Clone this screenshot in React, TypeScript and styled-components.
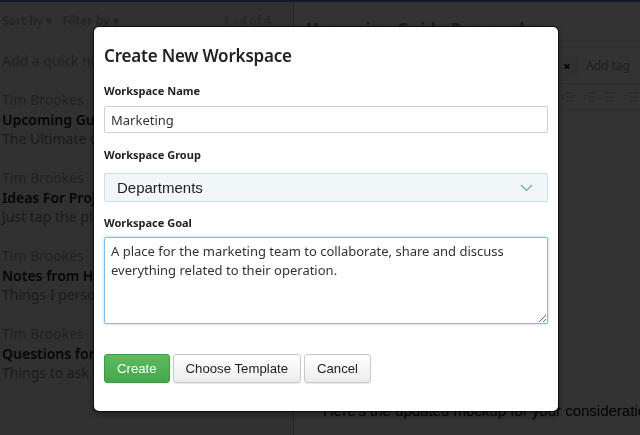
import React from "react";
import styled, { createGlobalStyle } from "styled-components";
import { IndentDecrease, IndentIncrease, AlignLeft, AlignCenter } from "lucide-react";

const GlobalStyle = createGlobalStyle`
  html, body {
    margin: 0;
    padding: 0;
    width: 640px;
    height: 435px;
    overflow: hidden;
    background: #fff;
    font-family: "Noto Sans", "Open Sans", sans-serif;
  }
  * { box-sizing: border-box; }
`;

const AppShell = styled.div`
  width: 640px;
  height: 435px;
  display: flex;
  flex-direction: column;
  background: #fff;
`;

const TopStrip = styled.div`
  flex: none;
  height: 2px;
  background: #5a86b8;
`;

const Columns = styled.div`
  flex: 1;
  display: flex;
  min-height: 0;
`;

const NoteList = styled.aside`
  flex: none;
  width: 294px;
  border-right: 1px solid #bdbdbd;
  background: #f3f3f3;
  display: flex;
  flex-direction: column;
  overflow: hidden;
`;

const ListHeader = styled.div`
  height: 36px;
  display: flex;
  align-items: center;
  padding: 0 22px 0 2px;
  gap: 10px;
  font-size: 12px;
  font-weight: 600;
  color: #b4b4b4;
  white-space: nowrap;

  > .count {
    margin-left: auto;
    font-weight: 400;
  }
`;

const QuickNote = styled.div`
  height: 44px;
  display: flex;
  align-items: center;
  padding-left: 2px;
  font-size: 14px;
  color: #a8a8a8;
  white-space: nowrap;
`;

const NoteItem = styled.div`
  padding: 8px 0 0 2px;
  height: 78px;
  font-size: 14px;
  line-height: 19.5px;
  white-space: nowrap;

  > .author { color: #a8a8a8; }
  > .title { color: #222; font-weight: 600; }
  > .snippet { color: #8a8a8a; }
`;

const Editor = styled.main`
  flex: 1;
  min-width: 0;
  display: flex;
  flex-direction: column;
  overflow: hidden;
`;

const NoteTitle = styled.h1`
  margin: 0;
  height: 46px;
  padding: 17px 0 0 12px;
  font-size: 17px;
  line-height: 22px;
  font-weight: 700;
  color: #808080;
  white-space: nowrap;
  border-bottom: 1px solid #e0e0e0;
`;

const TagRow = styled.div`
  height: 36px;
  display: flex;
  align-items: center;
  justify-content: flex-end;
  gap: 8px;
  padding-right: 10px;
  border-bottom: 1px solid #e0e0e0;
  font-size: 12px;
  color: #999;
`;

const TagChip = styled.span`
  width: 22px;
  height: 22px;
  display: inline-flex;
  align-items: center;
  justify-content: center;
  background: #f4f6f8;
  color: #000;
  font-size: 13px;
  font-weight: 700;
`;

const Toolbar = styled.div`
  height: 26px;
  display: flex;
  align-items: center;
  justify-content: flex-end;
  gap: 8px;
  color: #b0b0b0;
  border-bottom: 1px solid #e6e6e6;
`;

const NoteBody = styled.div`
  flex: 1;
  display: flex;
  align-items: flex-end;
  padding: 0 0 16px 29px;
  font-family: "Liberation Sans", Arial, sans-serif;
  font-size: 15px;
  color: #111;
  white-space: nowrap;
  overflow: hidden;
`;

const Backdrop = styled.div`
  position: fixed;
  inset: 0;
  background: rgba(0, 0, 0, 0.8);
  display: flex;
  align-items: flex-start;
  padding: 27px 0 0 94px;
`;

const Modal = styled.div`
  width: 464px;
  height: 384px;
  background: #fff;
  border-radius: 5px;
  padding: 14px 10px 0 10px;
  box-shadow: 0 0 0 1px rgba(0, 0, 0, 0.6), 0 3px 10px rgba(0, 0, 0, 0.45);
  display: flex;
  flex-direction: column;
  font-family: "Noto Sans", "Open Sans", sans-serif;
`;

const ModalTitle = styled.h2`
  margin: 0 0 12px 0;
  font-size: 17px;
  line-height: 30px;
  font-weight: 600;
  letter-spacing: -0.2px;
  color: #222;
`;

const FieldLabel = styled.label<{ $gap?: number }>`
  display: block;
  font-size: 11px;
  line-height: 16px;
  font-weight: 700;
  color: #222;
  margin-bottom: ${(p) => p.$gap ?? 7}px;
`;

const Field = styled.div<{ $after: number }>`
  margin-bottom: ${(p) => p.$after}px;
`;

const TextInput = styled.input`
  display: block;
  width: 100%;
  height: 27px;
  border: 1px solid #cfcfcf;
  border-radius: 2px;
  padding: 0 6px;
  font-family: "Noto Sans", "Open Sans", sans-serif;
  font-size: 13px;
  color: #333;
  outline: none;
`;

const SelectBox = styled.div`
  height: 29px;
  display: flex;
  align-items: center;
  justify-content: space-between;
  padding: 0 14px 0 12px;
  background: #f1f6f9;
  border: 1px solid #c8dded;
  border-radius: 2px;
  font-family: "Liberation Sans", Arial, sans-serif;
  font-size: 15px;
  color: #222;
`;

const GoalArea = styled.textarea`
  display: block;
  width: 100%;
  height: 87px;
  border: 1px solid #7dbcef;
  border-radius: 2px;
  box-shadow: 0 0 3px rgba(90, 160, 235, 0.55);
  padding: 4px 6px;
  font-family: "Noto Sans", "Open Sans", sans-serif;
  font-size: 13px;
  line-height: 19px;
  color: #333;
  outline: none;
  resize: both;
`;

const ButtonRow = styled.div`
  display: flex;
  gap: 3px;
`;

const Button = styled.button<{ $primary?: boolean }>`
  height: 29px;
  padding: 0 12px;
  border-radius: 3px;
  font-family: "Liberation Sans", Arial, sans-serif;
  font-size: 13.2px;
  cursor: pointer;
  border: 1px solid ${(p) => (p.$primary ? "#3f9a43" : "#c9c9c9")};
  color: ${(p) => (p.$primary ? "#fff" : "#222")};
  background: ${(p) =>
    p.$primary
      ? "linear-gradient(#5cbb5f, #46a64a)"
      : "linear-gradient(#ffffff, #ececec)"};
  box-shadow: 0 1px 1px rgba(0, 0, 0, 0.08);
`;

const Chevron = () => (
  <svg width="13" height="8" viewBox="0 0 13 8" fill="none">
    <polyline points="1,1 6.5,6.5 12,1" stroke="#6f9fc6" strokeWidth="1.2" />
  </svg>
);

const notes = [
  { title: "Upcoming Guide Proposals", snippet: "The Ultimate Guide to" },
  { title: "Ideas For Projects", snippet: "Just tap the plus button" },
  { title: "Notes from Hangouts", snippet: "Things I personally" },
  { title: "Questions for Team", snippet: "Things to ask about" },
];

export default function App() {
  return (
    <>
      <GlobalStyle />
      <AppShell>
        <TopStrip />
        <Columns>
          <NoteList>
            <ListHeader>
              <span>Sort by ▾</span>
              <span>Filter by ▾</span>
              <span className="count">1 - 4 of 4</span>
            </ListHeader>
            <QuickNote>Add a quick note...</QuickNote>
            {notes.map((n) => (
              <NoteItem key={n.title}>
                <div className="author">Tim Brookes</div>
                <div className="title">{n.title}</div>
                <div className="snippet">{n.snippet}</div>
              </NoteItem>
            ))}
          </NoteList>
          <Editor>
            <NoteTitle>Upcoming Guide Proposals</NoteTitle>
            <TagRow>
              <TagChip>×</TagChip>
              <span>Add tag</span>
            </TagRow>
            <Toolbar>
              <IndentDecrease size={14} strokeWidth={1.5} />
              <IndentIncrease size={14} strokeWidth={1.5} />
              <AlignLeft size={14} strokeWidth={1.5} />
              <AlignCenter size={14} strokeWidth={1.5} />
            </Toolbar>
            <NoteBody>Here's the updated mockup for your consideration, take a look</NoteBody>
          </Editor>
        </Columns>
      </AppShell>

      <Backdrop>
        <Modal>
          <ModalTitle>Create New Workspace</ModalTitle>
          <Field $after={14}>
            <FieldLabel $gap={7}>Workspace Name</FieldLabel>
            <TextInput defaultValue="Marketing" />
          </Field>
          <Field $after={13}>
            <FieldLabel $gap={10}>Workspace Group</FieldLabel>
            <SelectBox>
              <span>Departments</span>
              <Chevron />
            </SelectBox>
          </Field>
          <Field $after={30}>
            <FieldLabel $gap={6}>Workspace Goal</FieldLabel>
            <GoalArea defaultValue="A place for the marketing team to collaborate, share and discuss everything related to their operation." />
          </Field>
          <ButtonRow>
            <Button $primary>Create</Button>
            <Button>Choose Template</Button>
            <Button>Cancel</Button>
          </ButtonRow>
        </Modal>
      </Backdrop>
    </>
  );
}
